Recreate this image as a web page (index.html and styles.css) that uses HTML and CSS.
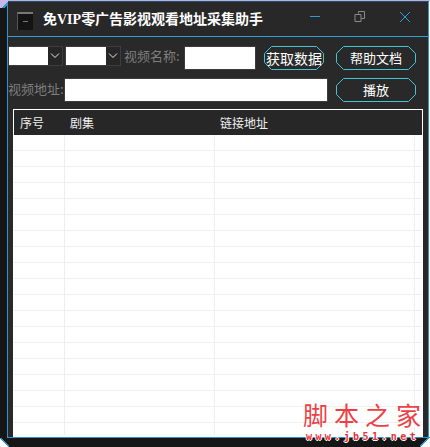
FILE: index.html
```html
<!DOCTYPE html>
<html lang="zh-CN">
<head>
<meta charset="utf-8">
<title>免VIP零广告影视观看地址采集助手</title>
<link rel="stylesheet" href="styles.css">
</head>
<body>
<div class="frame">
  <div class="window">
    <header class="titlebar">
      <div class="app-icon"><span class="app-dash"></span></div>
      <h1 class="title">免<span class="latin">VIP</span>零广告影视观看地址采集助手</h1>
      <div class="controls">
        <div class="ctl"><svg width="12" height="12" viewBox="0 0 12 12"><path d="M1 5.5H11" class="ico-blue"/></svg></div>
        <div class="ctl"><svg width="12" height="12" viewBox="0 0 12 12"><path d="M4.5 2.5V.5H10.5V7.5H7.5M1 3.5H7V10.5H1Z" class="ico-gray"/></svg></div>
        <div class="ctl"><svg width="12" height="12" viewBox="0 0 12 12"><path d="M1 1L11 11M11 1L1 11" class="ico-blue"/></svg></div>
      </div>
    </header>
    <main class="panel">
      <div class="row">
        <div class="combo"><div class="combo-field"></div><div class="combo-arrow"><svg width="10" height="6" viewBox="0 0 10 6"><path d="M1 .5L5 4.5L9 .5" class="ico-white"/></svg></div></div>
        <div class="combo combo-2"><div class="combo-field"></div><div class="combo-arrow"><svg width="10" height="6" viewBox="0 0 10 6"><path d="M1 .5L5 4.5L9 .5" class="ico-white"/></svg></div></div>
        <label class="label label-name">视频名称:</label>
        <div class="input input-name"></div>
        <button class="btn btn-fetch"><svg class="btn-shape" width="60" height="24" viewBox="0 0 60 24"><path d="M7.5.5H52.5L59.5 7.5V16.5L52.5 23.5H7.5L.5 16.5V7.5Z"/></svg><span class="btn-text">获取数据</span></button>
        <button class="btn btn-wide"><svg class="btn-shape" width="80" height="24" viewBox="0 0 80 24"><path d="M7.5.5H72.5L79.5 7.5V16.5L72.5 23.5H7.5L.5 16.5V7.5Z"/></svg><span class="btn-text">帮助文档</span></button>
      </div>
      <div class="row">
        <label class="label label-url">视频地址:</label>
        <div class="input input-url"></div>
        <button class="btn btn-wide btn-play"><svg class="btn-shape" width="80" height="24" viewBox="0 0 80 24"><path d="M7.5.5H72.5L79.5 7.5V16.5L72.5 23.5H7.5L.5 16.5V7.5Z"/></svg><span class="btn-text">播放</span></button>
      </div>
      <div class="grid-wrap">
        <table class="grid">
          <colgroup><col class="c1"><col class="c2"><col class="c3"><col class="c4"></colgroup>
          <thead><tr><th class="th-first">序号</th><th>剧集</th><th>链接地址</th><th></th></tr></thead>
          <tbody>
            <tr><td></td><td></td><td></td><td></td></tr>
            <tr><td></td><td></td><td></td><td></td></tr>
            <tr><td></td><td></td><td></td><td></td></tr>
            <tr><td></td><td></td><td></td><td></td></tr>
            <tr><td></td><td></td><td></td><td></td></tr>
            <tr><td></td><td></td><td></td><td></td></tr>
            <tr><td></td><td></td><td></td><td></td></tr>
            <tr><td></td><td></td><td></td><td></td></tr>
            <tr><td></td><td></td><td></td><td></td></tr>
            <tr><td></td><td></td><td></td><td></td></tr>
            <tr><td></td><td></td><td></td><td></td></tr>
            <tr><td></td><td></td><td></td><td></td></tr>
            <tr><td></td><td></td><td></td><td></td></tr>
            <tr><td></td><td></td><td></td><td></td></tr>
            <tr><td></td><td></td><td></td><td></td></tr>
            <tr><td></td><td></td><td></td><td></td></tr>
            <tr><td></td><td></td><td></td><td></td></tr>
            <tr><td></td><td></td><td></td><td></td></tr>
            <tr class="last"><td></td><td></td><td></td><td></td></tr>
          </tbody>
        </table>
      </div>
    </main>
  </div>
</div>
<div class="corner corner-tl"></div>
<div class="corner corner-bl"></div>
<div class="corner corner-br"></div>
<div class="mark">
  <div class="mark-cn">脚本之家</div>
  <div class="mark-en">www.jb51.net</div>
</div>
</body>
</html>
```
FILE: styles.css
```css
* { box-sizing: border-box; }
html, body { margin: 0; padding: 0; }
body {
  position: relative;
  width: 430px;
  height: 447px;
  overflow: hidden;
  background: #fff;
  padding-top: 1px;
  font-family: "Noto Sans CJK SC", "Liberation Sans", sans-serif;
  box-shadow: inset 0 1px 0 #bcaee0;
}
.frame {
  width: 429px;
  height: 446px;
  background: #161616;
  padding: 0 0 9px 7px;
}
.window {
  width: 422px;
  height: 437px;
  border: 1px solid #2f95cc;
  border-top-color: #25506a;
  background: #292929;
  display: flex;
  flex-direction: column;
}
.titlebar {
  flex: none;
  height: 35px;
  border-bottom: 1px solid #2f9fd8;
  display: flex;
  align-items: center;
  padding-left: 9px;
  background: #282828;
}
.app-icon {
  width: 16px;
  height: 18px;
  margin-top: 3px;
  background: #141414;
  border-top: 2px solid #777;
  border-left: 1px solid #555;
  display: flex;
  align-items: center;
  justify-content: center;
}
.app-dash { width: 5px; height: 1px; background: #777; }
.title {
  margin: 0 0 0 10px;
  color: #fff;
  font: bold 14px/18px "Noto Sans CJK SC", sans-serif;
}
.latin { font-family: "Liberation Serif", serif; }
.controls { margin-left: auto; margin-right: 1px; display: flex; margin-top: -5px; }
.ctl {
  width: 45px;
  height: 24px;
  display: flex;
  align-items: center;
  justify-content: center;
}
.ctl svg, .combo-arrow svg { display: block; }
.ico-blue { fill: none; stroke: #2e9bd6; stroke-width: 1; }
.ico-gray { fill: none; stroke: #8a8a8a; stroke-width: 1; }
.ico-white { fill: none; stroke: #e8e8e8; stroke-width: 1; }
.panel {
  flex: 1;
  min-height: 0;
  display: flex;
  flex-direction: column;
  padding-top: 9px;
  gap: 8px;
}
.row { flex: none; height: 24px; display: flex; align-items: flex-start; }
.combo {
  width: 55px;
  height: 20px;
  border: 1px solid #3c3c3c;
  display: flex;
}
.combo-2 { width: 56px; margin-left: 2px; }
.combo-field { flex: 1; background: #fff; }
.combo-arrow {
  width: 14px;
  background: #262626;
  display: flex;
  align-items: center;
  justify-content: center;
}
.label {
  color: #7e7e7e;
  font-size: 13px;
  font-weight: normal;
  line-height: 20px;
  white-space: nowrap;
}
.label-name { width: 60px; margin-left: 3px; }
.label-url { width: 56px; margin-top: 1px; }
.input {
  height: 24px;
  background: #fff;
  border: 1px solid #3c3c3c;
}
.input-name { width: 72px; }
.input-url { width: 264px; }
.btn {
  position: relative;
  height: 24px;
  padding: 0;
  border: 0;
  background: none;
  color: #fff;
  font: 13px/24px "Noto Sans CJK SC", sans-serif;
}
.btn-shape { position: absolute; left: 0; top: 0; display: block; }
.btn-shape path { fill: none; stroke: #46c3d6; stroke-width: 1; }
.btn-text { position: relative; }
.btn-fetch { width: 60px; margin-left: 8px; font-size: 14px; }
.btn-wide { width: 80px; margin-left: 12px; }
.btn-play { margin-left: 8px; }
.grid-wrap {
  flex: 1;
  min-height: 0;
  margin: -1px 5px 0 5px;
  background: #fff;
  border: 1px solid #fff;
  border-bottom: 0;
  overflow: hidden;
}
.grid {
  width: 408px;
  table-layout: fixed;
  border-collapse: separate;
  border-spacing: 0;
}
.c1 { width: 51px; }
.c2 { width: 150px; }
.c3 { width: 200px; }
.c4 { width: 7px; }
.grid th {
  height: 25px;
  padding: 0 0 0 5px;
  background: #272727;
  color: #f0f0f0;
  font-size: 12px;
  font-weight: normal;
  text-align: left;
  white-space: nowrap;
}
.grid th.th-first { padding-left: 6px; }
.grid td {
  height: 16px;
  padding: 0;
  border-right: 1px solid #efefef;
  border-bottom: 1px solid #efefef;
}
.grid td:last-child { border-right: 0; }
.grid tr.last td { height: 12px; border-bottom: 0; }
.corner { position: absolute; }
.corner-tl {
  left: 0; top: 0; width: 8px; height: 8px;
  background: linear-gradient(135deg, #c9b8e6 0 60%, #2f95cc 60% 75%, transparent 75%);
}
.corner-bl {
  left: 0; bottom: 0; width: 9px; height: 9px;
  background: linear-gradient(45deg, #fff 0 45%, #2f95cc 45% 58%, transparent 58%);
}
.corner-br {
  right: 0; bottom: 0; width: 10px; height: 10px;
  background: linear-gradient(-45deg, #fff 0 45%, #2f95cc 45% 58%, transparent 58%);
}
.mark {
  position: absolute;
  left: 303px;
  top: 398px;
  width: 118px;
  color: #ee3f45;
}
.mark-cn {
  font: 25px/32px "Noto Sans CJK SC", sans-serif;
  letter-spacing: 6px;
  white-space: nowrap;
}
.mark-en {
  margin: 2px 0 0 3px;
  font: bold 10px/10px "DejaVu Sans Mono", monospace;
  letter-spacing: 3.4px;
  white-space: nowrap;
  color: #e8323a;
  text-shadow: 1px 0 0 #fff, -1px 0 0 #fff, 0 1px 0 #fff, 0 -1px 0 #fff;
}
```
